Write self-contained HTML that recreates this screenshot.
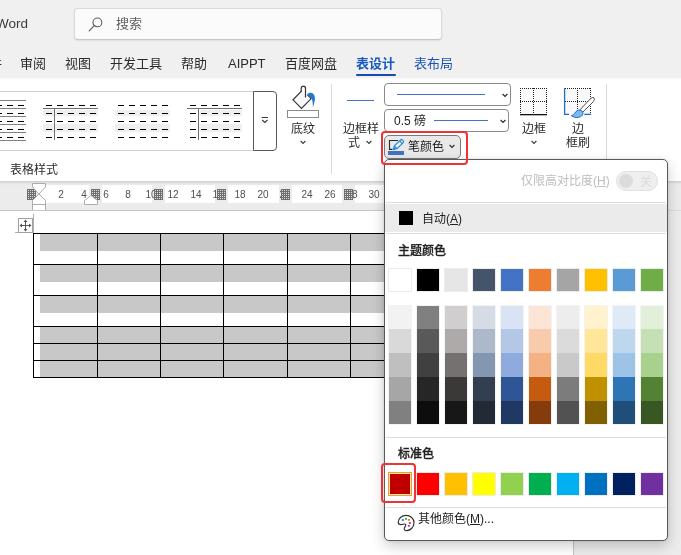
<!DOCTYPE html>
<html lang="zh-CN"><head><meta charset="utf-8"><title>Word</title>
<style>
*{box-sizing:border-box;margin:0;padding:0}
html,body{width:681px;height:555px;overflow:hidden}
body{position:relative;background:#f0f0f0;font-family:"Liberation Sans", "Noto Sans CJK SC", sans-serif;color:#242424;font-size:12px}
.a{position:absolute}
.t,.tab,.lbl{will-change:transform}
.t{position:absolute;white-space:nowrap;line-height:1}
.tab{position:absolute;top:56px;font-size:13px;line-height:15px;white-space:nowrap;color:#2b2b2b}
.lbl{position:absolute;font-size:12px;line-height:14px;white-space:nowrap;color:#2b2b2b;text-align:center}
.sw{position:absolute;width:22px}
u{text-decoration:underline;text-underline-offset:1px}
</style></head><body>

<div class="t" style="right:652.5px;top:16px;font-size:13.5px;line-height:15px;color:#3b3b3b">Word</div>
<div class="a" style="left:74px;top:8px;width:367.5px;height:32px;background:#fbfbfb;border:1px solid #dadada;border-bottom-color:#c6c6c6;border-radius:4px;box-shadow:0 1px 2px rgba(0,0,0,.08)"></div>
<svg class="a" style="left:87px;top:14.7px" width="18" height="18" viewBox="0 0 18 18"><circle cx="10.4" cy="7.4" r="4.4" fill="none" stroke="#5f5f5f" stroke-width="1.1"/><path d="M7.2 10.6 L2.2 15.8" stroke="#5f5f5f" stroke-width="1.2" stroke-linecap="round"/></svg>
<div class="t" style="left:115.5px;top:16px;font-size:13px;line-height:15px;color:#616161">搜索</div>
<div class="tab" style="left:-24.5px">邮件</div>
<div class="tab" style="left:20px">审阅</div>
<div class="tab" style="left:64.5px">视图</div>
<div class="tab" style="left:109.5px">开发工具</div>
<div class="tab" style="left:181px">帮助</div>
<div class="tab" style="left:228px">AIPPT</div>
<div class="tab" style="left:285px">百度网盘</div>
<div class="tab" style="left:356px;font-weight:bold;color:#185abd">表设计</div>
<div class="tab" style="left:414px;color:#1a52b3">表布局</div>
<div class="a" style="left:356px;top:73.6px;width:39.6px;height:2.5px;background:#124db3;border-radius:1.2px"></div>
<div class="a" style="left:0;top:78px;width:681px;height:103px;background:linear-gradient(#f7f7f7 0,#fdfdfd 1px,#fff 2px)"></div>
<div class="a" style="left:0;top:181px;width:681px;height:30px;background:linear-gradient(#c9c9c9 0,#d9d9d9 1px,#e4e4e4 2px,#eaeaea 3.5px,#ececec 5px)"></div>
<div class="a" style="left:-5px;top:91px;width:260px;height:60px;border:1px solid #d1d1d1;background:#fff"></div>
<div class="a" style="left:253px;top:91px;width:24px;height:60px;border:1px solid #585858;border-radius:0 4px 4px 0;background:#fff"></div>
<svg class="a" style="left:259px;top:113px" width="12" height="12" viewBox="0 0 12 12"><path d="M2.7 4.5H9M3.2 7L5.85 9.5L8.5 7" fill="none" stroke="#3a3a3a" stroke-width="1.1"/></svg>
<svg class="a" style="left:-29px;top:98px" width="56" height="46" viewBox="0 0 56 46"><rect x="0" y="2" width="55" height="1" fill="#808080"/><rect x="0" y="10" width="55" height="1" fill="#808080"/><rect x="0" y="18" width="55" height="1" fill="#808080"/><rect x="0" y="26" width="55" height="1" fill="#808080"/><rect x="0" y="34" width="55" height="1" fill="#808080"/><rect x="0" y="42" width="55" height="1" fill="#808080"/><rect x="3" y="7" width="6" height="1" fill="#000"/><rect x="14" y="7" width="6" height="1" fill="#000"/><rect x="25" y="7" width="6" height="1" fill="#000"/><rect x="36" y="7" width="6" height="1" fill="#000"/><rect x="47" y="7" width="6" height="1" fill="#000"/><rect x="3" y="15" width="6" height="1" fill="#000"/><rect x="14" y="15" width="6" height="1" fill="#000"/><rect x="25" y="15" width="6" height="1" fill="#000"/><rect x="36" y="15" width="6" height="1" fill="#000"/><rect x="47" y="15" width="6" height="1" fill="#000"/><rect x="3" y="23" width="6" height="1" fill="#000"/><rect x="14" y="23" width="6" height="1" fill="#000"/><rect x="25" y="23" width="6" height="1" fill="#000"/><rect x="36" y="23" width="6" height="1" fill="#000"/><rect x="47" y="23" width="6" height="1" fill="#000"/><rect x="3" y="31" width="6" height="1" fill="#000"/><rect x="14" y="31" width="6" height="1" fill="#000"/><rect x="25" y="31" width="6" height="1" fill="#000"/><rect x="36" y="31" width="6" height="1" fill="#000"/><rect x="47" y="31" width="6" height="1" fill="#000"/><rect x="3" y="39" width="6" height="1" fill="#000"/><rect x="14" y="39" width="6" height="1" fill="#000"/><rect x="25" y="39" width="6" height="1" fill="#000"/><rect x="36" y="39" width="6" height="1" fill="#000"/><rect x="47" y="39" width="6" height="1" fill="#000"/></svg>
<svg class="a" style="left:43px;top:98px" width="56" height="46" viewBox="0 0 56 46"><rect x="0" y="12" width="55" height="6" fill="#efefef"/><rect x="0" y="26" width="55" height="8" fill="#efefef"/><rect x="0" y="10" width="55" height="1" fill="#707070"/><rect x="11" y="10" width="1" height="32" fill="#707070"/><rect x="3" y="7" width="6" height="1" fill="#000"/><rect x="14" y="7" width="6" height="1" fill="#000"/><rect x="25" y="7" width="6" height="1" fill="#000"/><rect x="36" y="7" width="6" height="1" fill="#000"/><rect x="47" y="7" width="6" height="1" fill="#000"/><rect x="3" y="15" width="6" height="1" fill="#000"/><rect x="14" y="15" width="6" height="1" fill="#000"/><rect x="25" y="15" width="6" height="1" fill="#000"/><rect x="36" y="15" width="6" height="1" fill="#000"/><rect x="47" y="15" width="6" height="1" fill="#000"/><rect x="3" y="23" width="6" height="1" fill="#000"/><rect x="14" y="23" width="6" height="1" fill="#000"/><rect x="25" y="23" width="6" height="1" fill="#000"/><rect x="36" y="23" width="6" height="1" fill="#000"/><rect x="47" y="23" width="6" height="1" fill="#000"/><rect x="3" y="31" width="6" height="1" fill="#000"/><rect x="14" y="31" width="6" height="1" fill="#000"/><rect x="25" y="31" width="6" height="1" fill="#000"/><rect x="36" y="31" width="6" height="1" fill="#000"/><rect x="47" y="31" width="6" height="1" fill="#000"/><rect x="3" y="39" width="6" height="1" fill="#000"/><rect x="14" y="39" width="6" height="1" fill="#000"/><rect x="25" y="39" width="6" height="1" fill="#000"/><rect x="36" y="39" width="6" height="1" fill="#000"/><rect x="47" y="39" width="6" height="1" fill="#000"/></svg>
<svg class="a" style="left:115px;top:98px" width="56" height="46" viewBox="0 0 56 46"><rect x="0" y="12" width="55" height="6" fill="#efefef"/><rect x="0" y="26" width="55" height="8" fill="#efefef"/><rect x="3" y="7" width="6" height="1" fill="#000"/><rect x="14" y="7" width="6" height="1" fill="#000"/><rect x="25" y="7" width="6" height="1" fill="#000"/><rect x="36" y="7" width="6" height="1" fill="#000"/><rect x="47" y="7" width="6" height="1" fill="#000"/><rect x="3" y="15" width="6" height="1" fill="#000"/><rect x="14" y="15" width="6" height="1" fill="#000"/><rect x="25" y="15" width="6" height="1" fill="#000"/><rect x="36" y="15" width="6" height="1" fill="#000"/><rect x="47" y="15" width="6" height="1" fill="#000"/><rect x="3" y="23" width="6" height="1" fill="#000"/><rect x="14" y="23" width="6" height="1" fill="#000"/><rect x="25" y="23" width="6" height="1" fill="#000"/><rect x="36" y="23" width="6" height="1" fill="#000"/><rect x="47" y="23" width="6" height="1" fill="#000"/><rect x="3" y="31" width="6" height="1" fill="#000"/><rect x="14" y="31" width="6" height="1" fill="#000"/><rect x="25" y="31" width="6" height="1" fill="#000"/><rect x="36" y="31" width="6" height="1" fill="#000"/><rect x="47" y="31" width="6" height="1" fill="#000"/><rect x="3" y="39" width="6" height="1" fill="#000"/><rect x="14" y="39" width="6" height="1" fill="#000"/><rect x="25" y="39" width="6" height="1" fill="#000"/><rect x="36" y="39" width="6" height="1" fill="#000"/><rect x="47" y="39" width="6" height="1" fill="#000"/></svg>
<svg class="a" style="left:187px;top:98px" width="56" height="46" viewBox="0 0 56 46"><rect x="12.5" y="12" width="42.5" height="6" fill="#efefef"/><rect x="12.5" y="26" width="42.5" height="8" fill="#efefef"/><rect x="0" y="10" width="55" height="1" fill="#707070"/><rect x="11" y="10" width="1" height="32" fill="#707070"/><rect x="3" y="7" width="6" height="1" fill="#000"/><rect x="14" y="7" width="6" height="1" fill="#000"/><rect x="25" y="7" width="6" height="1" fill="#000"/><rect x="36" y="7" width="6" height="1" fill="#000"/><rect x="47" y="7" width="6" height="1" fill="#000"/><rect x="3" y="15" width="6" height="1" fill="#000"/><rect x="14" y="15" width="6" height="1" fill="#000"/><rect x="25" y="15" width="6" height="1" fill="#000"/><rect x="36" y="15" width="6" height="1" fill="#000"/><rect x="47" y="15" width="6" height="1" fill="#000"/><rect x="3" y="23" width="6" height="1" fill="#000"/><rect x="14" y="23" width="6" height="1" fill="#000"/><rect x="25" y="23" width="6" height="1" fill="#000"/><rect x="36" y="23" width="6" height="1" fill="#000"/><rect x="47" y="23" width="6" height="1" fill="#000"/><rect x="3" y="31" width="6" height="1" fill="#000"/><rect x="14" y="31" width="6" height="1" fill="#000"/><rect x="25" y="31" width="6" height="1" fill="#000"/><rect x="36" y="31" width="6" height="1" fill="#000"/><rect x="47" y="31" width="6" height="1" fill="#000"/><rect x="3" y="39" width="6" height="1" fill="#000"/><rect x="14" y="39" width="6" height="1" fill="#000"/><rect x="25" y="39" width="6" height="1" fill="#000"/><rect x="36" y="39" width="6" height="1" fill="#000"/><rect x="47" y="39" width="6" height="1" fill="#000"/></svg>
<div class="lbl" style="left:10px;top:162.5px">表格样式</div>
<svg class="a" style="left:286px;top:84px" width="34" height="36" viewBox="0 0 34 36"><rect x="1.5" y="26.5" width="31" height="7" fill="#fff" stroke="#8c8c8c"/><path d="M15.2 7.4 L7 15.85 L15.5 24.4 L25.2 14.6 L21.4 10.9" fill="#f8f8f8" stroke="#333" stroke-width="1.2" stroke-linejoin="miter"/><path d="M15.2 8 V4.2 a2.15 2.15 0 0 1 4.3 0 V13.4" fill="none" stroke="#333" stroke-width="1.2"/><path d="M21.1 10.6 C22.6 8.6 25.6 8.2 27.4 10 C29.4 12 29.2 15.5 28.2 19 C27.7 20.8 27.2 22.4 26.9 23.6 C26.8 20.8 26.8 18 26.2 16.2 C25.9 15.3 25.6 15 25.2 14.6 Z" fill="#2177c9"/></svg>
<div class="lbl" style="left:290.5px;top:121.5px">底纹</div>
<svg class="a" style="left:298px;top:139px" width="10" height="7" viewBox="0 0 10 7"><path d="M2.6 2L5 4.4L7.4 2" fill="none" stroke="#3a3a3a" stroke-width="1.1"/></svg>
<div class="a" style="left:331px;top:84px;width:1px;height:90px;background:#dadada"></div>
<div class="a" style="left:347px;top:100px;width:27px;height:1px;background:#4472c4"></div>
<div class="lbl" style="left:342.5px;top:121.5px">边框样</div>
<div class="lbl" style="left:348px;top:136px">式</div>
<svg class="a" style="left:363.5px;top:139px" width="10" height="7" viewBox="0 0 10 7"><path d="M2.6 2L5 4.4L7.4 2" fill="none" stroke="#3a3a3a" stroke-width="1.1"/></svg>
<div class="a" style="left:384px;top:83px;width:127px;height:23px;border:1px solid #8a8a8a;border-radius:4px;background:#fff"></div>
<div class="a" style="left:397px;top:93.5px;width:88px;height:1px;background:#4472c4"></div>
<svg class="a" style="left:500px;top:92px" width="10" height="7" viewBox="0 0 10 7"><path d="M2.6 2L5 4.4L7.4 2" fill="none" stroke="#2a2a2a" stroke-width="1.2"/></svg>
<div class="a" style="left:384px;top:109px;width:125px;height:23px;border:1px solid #8a8a8a;border-radius:4px;background:#fff"></div>
<div class="t" style="left:394px;top:113.5px;font-size:12px;line-height:14px;color:#222">0.5 磅</div>
<div class="a" style="left:434px;top:120px;width:54px;height:1px;background:#4472c4"></div>
<svg class="a" style="left:498px;top:118px" width="10" height="7" viewBox="0 0 10 7"><path d="M2.6 2L5 4.4L7.4 2" fill="none" stroke="#2a2a2a" stroke-width="1.2"/></svg>
<div class="a" style="left:384px;top:135px;width:77px;height:24px;border:1px solid #7a7a7a;border-radius:5px;background:#e9e9e9"></div>
<svg class="a" style="left:386px;top:137px" width="22" height="20" viewBox="0 0 22 20"><rect x="2" y="14" width="16" height="4" fill="#4472c4"/><path d="M12 3.5H3.5V12.4H6.4" fill="none" stroke="#2a2a2a" stroke-width="1.1"/><g transform="translate(7.2 12.6) rotate(-43.6)"><path d="M0 0 L3.8 -1.95 H11.4 A1.95 1.95 0 0 1 11.4 1.95 H3.8 Z" fill="#e6f0fb" stroke="#1e86d4" stroke-width="1.2" stroke-linejoin="round"/><path d="M0.2 0 L3.8 -1.9 V1.9 Z" fill="#2f8fdc"/><path d="M10.7 -1.95 V1.95" stroke="#1e86d4" stroke-width="1"/></g></svg>
<div class="t" style="left:408px;top:140px;font-size:12px;line-height:14px;color:#222">笔颜色</div>
<svg class="a" style="left:447px;top:143px" width="10" height="7" viewBox="0 0 10 7"><path d="M2.6 2L5 4.4L7.4 2" fill="none" stroke="#2a2a2a" stroke-width="1.1"/></svg>
<svg class="a" style="left:519px;top:87px" width="30" height="30" viewBox="0 0 30 30"><rect x="1" y="1" width="27" height="26" fill="#fafafa"/><path d="M1.5 1V27M14.5 1V27M27.5 1V27" stroke="#222" stroke-width="1" stroke-dasharray="1 1" fill="none"/><path d="M1 1.5H28M1 14.5H28" stroke="#222" stroke-width="1" stroke-dasharray="1 1" fill="none"/><rect x="1" y="27" width="27" height="1.3" fill="#111"/></svg>
<div class="lbl" style="left:521.5px;top:121.5px">边框</div>
<svg class="a" style="left:528.5px;top:139px" width="10" height="7" viewBox="0 0 10 7"><path d="M2.6 2L5 4.4L7.4 2" fill="none" stroke="#3a3a3a" stroke-width="1.1"/></svg>
<svg class="a" style="left:563px;top:87px" width="34" height="34" viewBox="0 0 34 34"><rect x="2" y="1" width="26" height="26" fill="#f9f9f9"/><path d="M14.5 1V27M27.5 1V27" stroke="#222" stroke-width="1" stroke-dasharray="1 1" fill="none"/><path d="M2 1.5H28M2 14.5H28" stroke="#222" stroke-width="1" stroke-dasharray="1 1" fill="none"/><path d="M1.6 1V27.3H6M21.3 27.3H28.2" stroke="#1e6fc5" stroke-width="1.3" fill="none"/><path d="M17.2 22.6 L27.6 11.6 Q29.9 9.7 31 10.9 Q32.2 12.3 30.4 14.6 L19.8 25.2 Z" fill="#fff" stroke="#505050" stroke-width="1"/><path d="M8.3 28.7 C11.6 28.4 11.8 24.5 14.6 23.4 C17.5 22.3 20.3 24.2 19.9 26.8 C19.4 30.3 13 32 8.3 28.7 Z" fill="#7ab8ee" stroke="#1e6fc5" stroke-width="1"/></svg>
<div class="lbl" style="left:571.5px;top:121.5px">边</div>
<div class="lbl" style="left:566px;top:136px">框刷</div>
<div class="a" style="left:606px;top:84px;width:1px;height:90px;background:#dadada"></div>
<div class="a" style="left:33px;top:185px;width:540px;height:18px;background:#fff"></div>
<div class="a" style="left:25px;top:185px;width:13px;height:18px;background:#ececec"></div>
<div class="a" style="left:89px;top:185px;width:13px;height:18px;background:#ececec"></div>
<div class="a" style="left:152px;top:185px;width:13px;height:18px;background:#ececec"></div>
<div class="a" style="left:215px;top:185px;width:13px;height:18px;background:#ececec"></div>
<div class="a" style="left:279px;top:185px;width:13px;height:18px;background:#ececec"></div>
<div class="a" style="left:342px;top:185px;width:13px;height:18px;background:#ececec"></div>
<div class="a" style="left:405px;top:185px;width:13px;height:18px;background:#ececec"></div>
<div class="a" style="left:469px;top:185px;width:13px;height:18px;background:#ececec"></div>
<div class="a" style="left:532px;top:185px;width:13px;height:18px;background:#ececec"></div>
<div class="t" style="left:51.4px;top:189.5px;width:20px;text-align:center;font-size:10px;line-height:10px;color:#505050">2</div>
<div class="t" style="left:73.7px;top:189.5px;width:20px;text-align:center;font-size:10px;line-height:10px;color:#505050">4</div>
<div class="t" style="left:96.1px;top:189.5px;width:20px;text-align:center;font-size:10px;line-height:10px;color:#505050">6</div>
<div class="t" style="left:118.4px;top:189.5px;width:20px;text-align:center;font-size:10px;line-height:10px;color:#505050">8</div>
<div class="t" style="left:140.8px;top:189.5px;width:20px;text-align:center;font-size:10px;line-height:10px;color:#505050">10</div>
<div class="t" style="left:163.2px;top:189.5px;width:20px;text-align:center;font-size:10px;line-height:10px;color:#505050">12</div>
<div class="t" style="left:185.5px;top:189.5px;width:20px;text-align:center;font-size:10px;line-height:10px;color:#505050">14</div>
<div class="t" style="left:207.9px;top:189.5px;width:20px;text-align:center;font-size:10px;line-height:10px;color:#505050">16</div>
<div class="t" style="left:230.2px;top:189.5px;width:20px;text-align:center;font-size:10px;line-height:10px;color:#505050">18</div>
<div class="t" style="left:252.6px;top:189.5px;width:20px;text-align:center;font-size:10px;line-height:10px;color:#505050">20</div>
<div class="t" style="left:275.0px;top:189.5px;width:20px;text-align:center;font-size:10px;line-height:10px;color:#505050">22</div>
<div class="t" style="left:297.3px;top:189.5px;width:20px;text-align:center;font-size:10px;line-height:10px;color:#505050">24</div>
<div class="t" style="left:319.7px;top:189.5px;width:20px;text-align:center;font-size:10px;line-height:10px;color:#505050">26</div>
<div class="t" style="left:342.0px;top:189.5px;width:20px;text-align:center;font-size:10px;line-height:10px;color:#505050">28</div>
<div class="t" style="left:364.4px;top:189.5px;width:20px;text-align:center;font-size:10px;line-height:10px;color:#505050">30</div>
<div class="t" style="left:386.8px;top:189.5px;width:20px;text-align:center;font-size:10px;line-height:10px;color:#505050">32</div>
<div class="t" style="left:409.1px;top:189.5px;width:20px;text-align:center;font-size:10px;line-height:10px;color:#505050">34</div>
<div class="t" style="left:431.5px;top:189.5px;width:20px;text-align:center;font-size:10px;line-height:10px;color:#505050">36</div>
<div class="t" style="left:453.8px;top:189.5px;width:20px;text-align:center;font-size:10px;line-height:10px;color:#505050">38</div>
<div class="t" style="left:476.2px;top:189.5px;width:20px;text-align:center;font-size:10px;line-height:10px;color:#505050">40</div>
<div class="t" style="left:498.6px;top:189.5px;width:20px;text-align:center;font-size:10px;line-height:10px;color:#505050">42</div>
<div class="t" style="left:520.9px;top:189.5px;width:20px;text-align:center;font-size:10px;line-height:10px;color:#505050">44</div>
<div class="t" style="left:543.3px;top:189.5px;width:20px;text-align:center;font-size:10px;line-height:10px;color:#505050">46</div>
<div class="t" style="left:565.6px;top:189.5px;width:20px;text-align:center;font-size:10px;line-height:10px;color:#505050">48</div>
<div class="a" style="left:27px;top:189px;width:9px;height:11px;background-color:#dcdcdc;background-image:repeating-linear-gradient(90deg,#6e6e6e 0 1px,transparent 1px 2px),repeating-linear-gradient(180deg,#6e6e6e 0 1px,transparent 1px 2px)"></div>
<div class="a" style="left:91px;top:189px;width:9px;height:11px;background-color:#dcdcdc;background-image:repeating-linear-gradient(90deg,#6e6e6e 0 1px,transparent 1px 2px),repeating-linear-gradient(180deg,#6e6e6e 0 1px,transparent 1px 2px)"></div>
<div class="a" style="left:154px;top:189px;width:9px;height:11px;background-color:#dcdcdc;background-image:repeating-linear-gradient(90deg,#6e6e6e 0 1px,transparent 1px 2px),repeating-linear-gradient(180deg,#6e6e6e 0 1px,transparent 1px 2px)"></div>
<div class="a" style="left:217px;top:189px;width:9px;height:11px;background-color:#dcdcdc;background-image:repeating-linear-gradient(90deg,#6e6e6e 0 1px,transparent 1px 2px),repeating-linear-gradient(180deg,#6e6e6e 0 1px,transparent 1px 2px)"></div>
<div class="a" style="left:281px;top:189px;width:9px;height:11px;background-color:#dcdcdc;background-image:repeating-linear-gradient(90deg,#6e6e6e 0 1px,transparent 1px 2px),repeating-linear-gradient(180deg,#6e6e6e 0 1px,transparent 1px 2px)"></div>
<div class="a" style="left:344px;top:189px;width:9px;height:11px;background-color:#dcdcdc;background-image:repeating-linear-gradient(90deg,#6e6e6e 0 1px,transparent 1px 2px),repeating-linear-gradient(180deg,#6e6e6e 0 1px,transparent 1px 2px)"></div>
<div class="a" style="left:407px;top:189px;width:9px;height:11px;background-color:#dcdcdc;background-image:repeating-linear-gradient(90deg,#6e6e6e 0 1px,transparent 1px 2px),repeating-linear-gradient(180deg,#6e6e6e 0 1px,transparent 1px 2px)"></div>
<div class="a" style="left:471px;top:189px;width:9px;height:11px;background-color:#dcdcdc;background-image:repeating-linear-gradient(90deg,#6e6e6e 0 1px,transparent 1px 2px),repeating-linear-gradient(180deg,#6e6e6e 0 1px,transparent 1px 2px)"></div>
<div class="a" style="left:534px;top:189px;width:9px;height:11px;background-color:#dcdcdc;background-image:repeating-linear-gradient(90deg,#6e6e6e 0 1px,transparent 1px 2px),repeating-linear-gradient(180deg,#6e6e6e 0 1px,transparent 1px 2px)"></div>
<svg class="a" style="left:31px;top:182px" width="17" height="30" viewBox="0 0 17 30"><path d="M1.5 1.5H14.5V5L8 12L1.5 5Z" fill="#fff" stroke="#adadad"/><path d="M8 12L14.5 18.5V28.5H1.5V18.5Z" fill="#fff" stroke="#adadad"/><path d="M1.5 22.5H14.5" stroke="#adadad"/></svg>
<svg class="a" style="left:83px;top:194px" width="17" height="12" viewBox="0 0 17 12"><path d="M1.5 10.5V6.5L8 1.5L14.5 6.5V10.5Z" fill="#fff" stroke="#adadad"/></svg>
<div class="a" style="left:0;top:210px;width:574px;height:345px;background:#fff;border-top:1px solid #c6c6c6;border-right:1px solid #c6c6c6"></div>
<div class="a" style="left:574px;top:210px;width:107px;height:345px;background:#ececec;border-top:1px solid #dcdcdc"></div>
<div class="a" style="left:33px;top:214px;width:1px;height:19px;background:#b0b0b0"></div>
<div class="a" style="left:15px;top:232px;width:19px;height:1px;background:#b0b0b0"></div>
<div class="a" style="left:18px;top:218px;width:15px;height:15px;background:#fff;border:1px solid #a0a0a0"></div>
<svg class="a" style="left:19px;top:219px" width="13" height="13" viewBox="0 0 13 13"><path d="M6.5 1.5V11.5M1.5 6.5H11.5" stroke="#555" stroke-width="1" fill="none"/><path d="M6.5 0.5L4.5 3H8.5ZM6.5 12.5L4.5 10H8.5ZM0.5 6.5L3 4.5V8.5ZM12.5 6.5L10 4.5V8.5Z" fill="#555"/></svg>
<div class="a" style="left:40px;top:234px;width:360px;height:17px;background:#c8c8c8"></div>
<div class="a" style="left:40px;top:265px;width:360px;height:17px;background:#c8c8c8"></div>
<div class="a" style="left:40px;top:296px;width:360px;height:17px;background:#c8c8c8"></div>
<div class="a" style="left:40px;top:327px;width:360px;height:16px;background:#c8c8c8"></div>
<div class="a" style="left:40px;top:344px;width:360px;height:16px;background:#c8c8c8"></div>
<div class="a" style="left:40px;top:361px;width:360px;height:16px;background:#c8c8c8"></div>
<div class="a" style="left:33px;top:233px;width:370px;height:1.3px;background:#000"></div>
<div class="a" style="left:33px;top:264px;width:370px;height:1.3px;background:#000"></div>
<div class="a" style="left:33px;top:295px;width:370px;height:1.3px;background:#000"></div>
<div class="a" style="left:33px;top:326px;width:370px;height:1.3px;background:#000"></div>
<div class="a" style="left:33px;top:343px;width:370px;height:1.3px;background:#000"></div>
<div class="a" style="left:33px;top:360px;width:370px;height:1.3px;background:#000"></div>
<div class="a" style="left:33px;top:377px;width:370px;height:1.3px;background:#000"></div>
<div class="a" style="left:33px;top:233px;width:1.3px;height:145px;background:#000"></div>
<div class="a" style="left:97px;top:233px;width:1.3px;height:145px;background:#000"></div>
<div class="a" style="left:160px;top:233px;width:1.3px;height:145px;background:#000"></div>
<div class="a" style="left:223px;top:233px;width:1.3px;height:145px;background:#000"></div>
<div class="a" style="left:287px;top:233px;width:1.3px;height:145px;background:#000"></div>
<div class="a" style="left:350px;top:233px;width:1.3px;height:145px;background:#000"></div>
<div class="a" style="left:413px;top:233px;width:1.3px;height:145px;background:#000"></div>
<div class="a" style="left:384px;top:159px;width:284px;height:382px;background:#fff;border:1px solid #5a5a5a;border-radius:5px;box-shadow:0 5px 14px rgba(0,0,0,.2),0 0 3px rgba(0,0,0,.1)"></div>
<div class="t" style="left:520.5px;top:174px;font-size:12px;line-height:14px;color:#bdbdbd">仅限高对比度(<u>H</u>)</div>
<div class="a" style="left:616px;top:171px;width:42px;height:20px;border-radius:10px;background:#efefef;border:1px solid #e0e0e0"></div>
<div class="a" style="left:619px;top:174px;width:14px;height:14px;border-radius:7px;background:#dcdcdc"></div>
<div class="t" style="left:640px;top:174.5px;font-size:12px;line-height:14px;color:#dcdcdc">关</div>
<div class="a" style="left:386px;top:202px;width:280px;height:1px;background:#dcdcdc"></div>
<div class="a" style="left:385px;top:204px;width:282px;height:28px;background:#ebebeb"></div>
<div class="a" style="left:386px;top:233px;width:280px;height:1px;background:#dcdcdc"></div>
<div class="a" style="left:399px;top:211px;width:14px;height:14px;background:#000"></div>
<div class="t" style="left:421.5px;top:211.5px;font-size:12px;line-height:14px;color:#222">自动(<u>A</u>)</div>
<div class="t" style="left:398px;top:243.7px;font-size:12px;line-height:14px;color:#222;font-weight:500;-webkit-text-stroke:0.3px #222">主题颜色</div>
<div class="sw" style="left:389px;top:269px;height:22px;background:#FFFFFF;box-shadow:0 0 0 1px #ececec"></div>
<div class="sw" style="left:417px;top:269px;height:22px;background:#000000;box-shadow:0 0 0 1px #ececec"></div>
<div class="sw" style="left:445px;top:269px;height:22px;background:#E7E6E6;box-shadow:0 0 0 1px #ececec"></div>
<div class="sw" style="left:473px;top:269px;height:22px;background:#44546A;box-shadow:0 0 0 1px #ececec"></div>
<div class="sw" style="left:501px;top:269px;height:22px;background:#4472C4;box-shadow:0 0 0 1px #ececec"></div>
<div class="sw" style="left:529px;top:269px;height:22px;background:#ED7D31;box-shadow:0 0 0 1px #ececec"></div>
<div class="sw" style="left:557px;top:269px;height:22px;background:#A5A5A5;box-shadow:0 0 0 1px #ececec"></div>
<div class="sw" style="left:585px;top:269px;height:22px;background:#FFC000;box-shadow:0 0 0 1px #ececec"></div>
<div class="sw" style="left:613px;top:269px;height:22px;background:#5B9BD5;box-shadow:0 0 0 1px #ececec"></div>
<div class="sw" style="left:641px;top:269px;height:22px;background:#70AD47;box-shadow:0 0 0 1px #ececec"></div>
<div class="sw" style="left:389px;top:306px;height:118px;box-shadow:0 0 0 1px #f3f3f3;background:linear-gradient(#F2F2F2 0px,#F2F2F2 23px,#D9D9D9 23px,#D9D9D9 47px,#BFBFBF 47px,#BFBFBF 71px,#A6A6A6 71px,#A6A6A6 95px,#808080 95px,#808080 118px)"></div>
<div class="sw" style="left:417px;top:306px;height:118px;box-shadow:0 0 0 1px #f3f3f3;background:linear-gradient(#808080 0px,#808080 23px,#595959 23px,#595959 47px,#404040 47px,#404040 71px,#262626 71px,#262626 95px,#0D0D0D 95px,#0D0D0D 118px)"></div>
<div class="sw" style="left:445px;top:306px;height:118px;box-shadow:0 0 0 1px #f3f3f3;background:linear-gradient(#D0CECE 0px,#D0CECE 23px,#AEAAAA 23px,#AEAAAA 47px,#767171 47px,#767171 71px,#3B3838 71px,#3B3838 95px,#181717 95px,#181717 118px)"></div>
<div class="sw" style="left:473px;top:306px;height:118px;box-shadow:0 0 0 1px #f3f3f3;background:linear-gradient(#D6DCE5 0px,#D6DCE5 23px,#ADB9CA 23px,#ADB9CA 47px,#8497B0 47px,#8497B0 71px,#333F50 71px,#333F50 95px,#222A35 95px,#222A35 118px)"></div>
<div class="sw" style="left:501px;top:306px;height:118px;box-shadow:0 0 0 1px #f3f3f3;background:linear-gradient(#DAE3F3 0px,#DAE3F3 23px,#B4C7E7 23px,#B4C7E7 47px,#8FAADC 47px,#8FAADC 71px,#2F5597 71px,#2F5597 95px,#203864 95px,#203864 118px)"></div>
<div class="sw" style="left:529px;top:306px;height:118px;box-shadow:0 0 0 1px #f3f3f3;background:linear-gradient(#FBE5D6 0px,#FBE5D6 23px,#F8CBAD 23px,#F8CBAD 47px,#F4B183 47px,#F4B183 71px,#C55A11 71px,#C55A11 95px,#843C0C 95px,#843C0C 118px)"></div>
<div class="sw" style="left:557px;top:306px;height:118px;box-shadow:0 0 0 1px #f3f3f3;background:linear-gradient(#EDEDED 0px,#EDEDED 23px,#DBDBDB 23px,#DBDBDB 47px,#C9C9C9 47px,#C9C9C9 71px,#7C7C7C 71px,#7C7C7C 95px,#525252 95px,#525252 118px)"></div>
<div class="sw" style="left:585px;top:306px;height:118px;box-shadow:0 0 0 1px #f3f3f3;background:linear-gradient(#FFF2CC 0px,#FFF2CC 23px,#FFE699 23px,#FFE699 47px,#FFD966 47px,#FFD966 71px,#BF9000 71px,#BF9000 95px,#806000 95px,#806000 118px)"></div>
<div class="sw" style="left:613px;top:306px;height:118px;box-shadow:0 0 0 1px #f3f3f3;background:linear-gradient(#DEEBF7 0px,#DEEBF7 23px,#BDD7EE 23px,#BDD7EE 47px,#9DC3E6 47px,#9DC3E6 71px,#2E75B6 71px,#2E75B6 95px,#1F4E79 95px,#1F4E79 118px)"></div>
<div class="sw" style="left:641px;top:306px;height:118px;box-shadow:0 0 0 1px #f3f3f3;background:linear-gradient(#E2F0D9 0px,#E2F0D9 23px,#C5E0B4 23px,#C5E0B4 47px,#A9D18E 47px,#A9D18E 71px,#548235 71px,#548235 95px,#385723 95px,#385723 118px)"></div>
<div class="a" style="left:386px;top:437px;width:280px;height:1px;background:#dcdcdc"></div>
<div class="t" style="left:398px;top:447.2px;font-size:12px;line-height:14px;color:#222;font-weight:500;-webkit-text-stroke:0.3px #222">标准色</div>
<div class="a" style="left:388px;top:472px;width:24px;height:24px;background:#C00000;border:1px solid #f29b3c;box-shadow:inset 0 0 0 1px #ffe59a"></div>
<div class="sw" style="left:417px;top:473px;height:22px;background:#FF0000;box-shadow:0 0 0 1px #ececec"></div>
<div class="sw" style="left:445px;top:473px;height:22px;background:#FFC000;box-shadow:0 0 0 1px #ececec"></div>
<div class="sw" style="left:473px;top:473px;height:22px;background:#FFFF00;box-shadow:0 0 0 1px #ececec"></div>
<div class="sw" style="left:501px;top:473px;height:22px;background:#92D050;box-shadow:0 0 0 1px #ececec"></div>
<div class="sw" style="left:529px;top:473px;height:22px;background:#00B050;box-shadow:0 0 0 1px #ececec"></div>
<div class="sw" style="left:557px;top:473px;height:22px;background:#00B0F0;box-shadow:0 0 0 1px #ececec"></div>
<div class="sw" style="left:585px;top:473px;height:22px;background:#0070C0;box-shadow:0 0 0 1px #ececec"></div>
<div class="sw" style="left:613px;top:473px;height:22px;background:#002060;box-shadow:0 0 0 1px #ececec"></div>
<div class="sw" style="left:641px;top:473px;height:22px;background:#7030A0;box-shadow:0 0 0 1px #ececec"></div>
<div class="a" style="left:381px;top:463px;width:35px;height:40px;border:2px solid #ee3338;border-radius:4px"></div>
<div class="a" style="left:386px;top:507px;width:280px;height:1px;background:#dcdcdc"></div>
<svg class="a" style="left:397px;top:514px" width="19" height="19" viewBox="0 0 19 19"><path d="M9.1 1.4 C13.6 1.4 17 4.6 17 8.7 C17 13 13.5 16.6 9.7 16.6 C7.6 16.6 6.8 15.4 7.4 13.9 C7.9 12.6 9.4 11.6 8.6 10.4 C7.8 9.4 6 10.6 3.8 10.6 C2 10.6 1.2 9.6 1.2 8.2 C1.2 4.6 4.6 1.4 9.1 1.4 Z" fill="#fdfdfd" stroke="#333" stroke-width="1.15"/><rect x="4.9" y="5.1" width="2" height="1.9" rx=".4" fill="#1e86d4"/><rect x="8" y="3.9" width="2" height="1.9" rx=".4" fill="#2fa44f"/><rect x="10.9" y="4.9" width="2" height="1.9" rx=".4" fill="#ec7a18"/><rect x="11.9" y="8" width="2" height="1.9" rx=".4" fill="#e8323a"/><rect x="10.9" y="10.9" width="2" height="1.9" rx=".4" fill="#a43cc4"/></svg>
<div class="t" style="left:418px;top:512px;font-size:12px;line-height:14px;color:#222">其他颜色(<u>M</u>)...</div>
<div class="a" style="left:381px;top:131px;width:87px;height:33.5px;border:2px solid #ee3338;border-radius:4px"></div>
</body></html>
